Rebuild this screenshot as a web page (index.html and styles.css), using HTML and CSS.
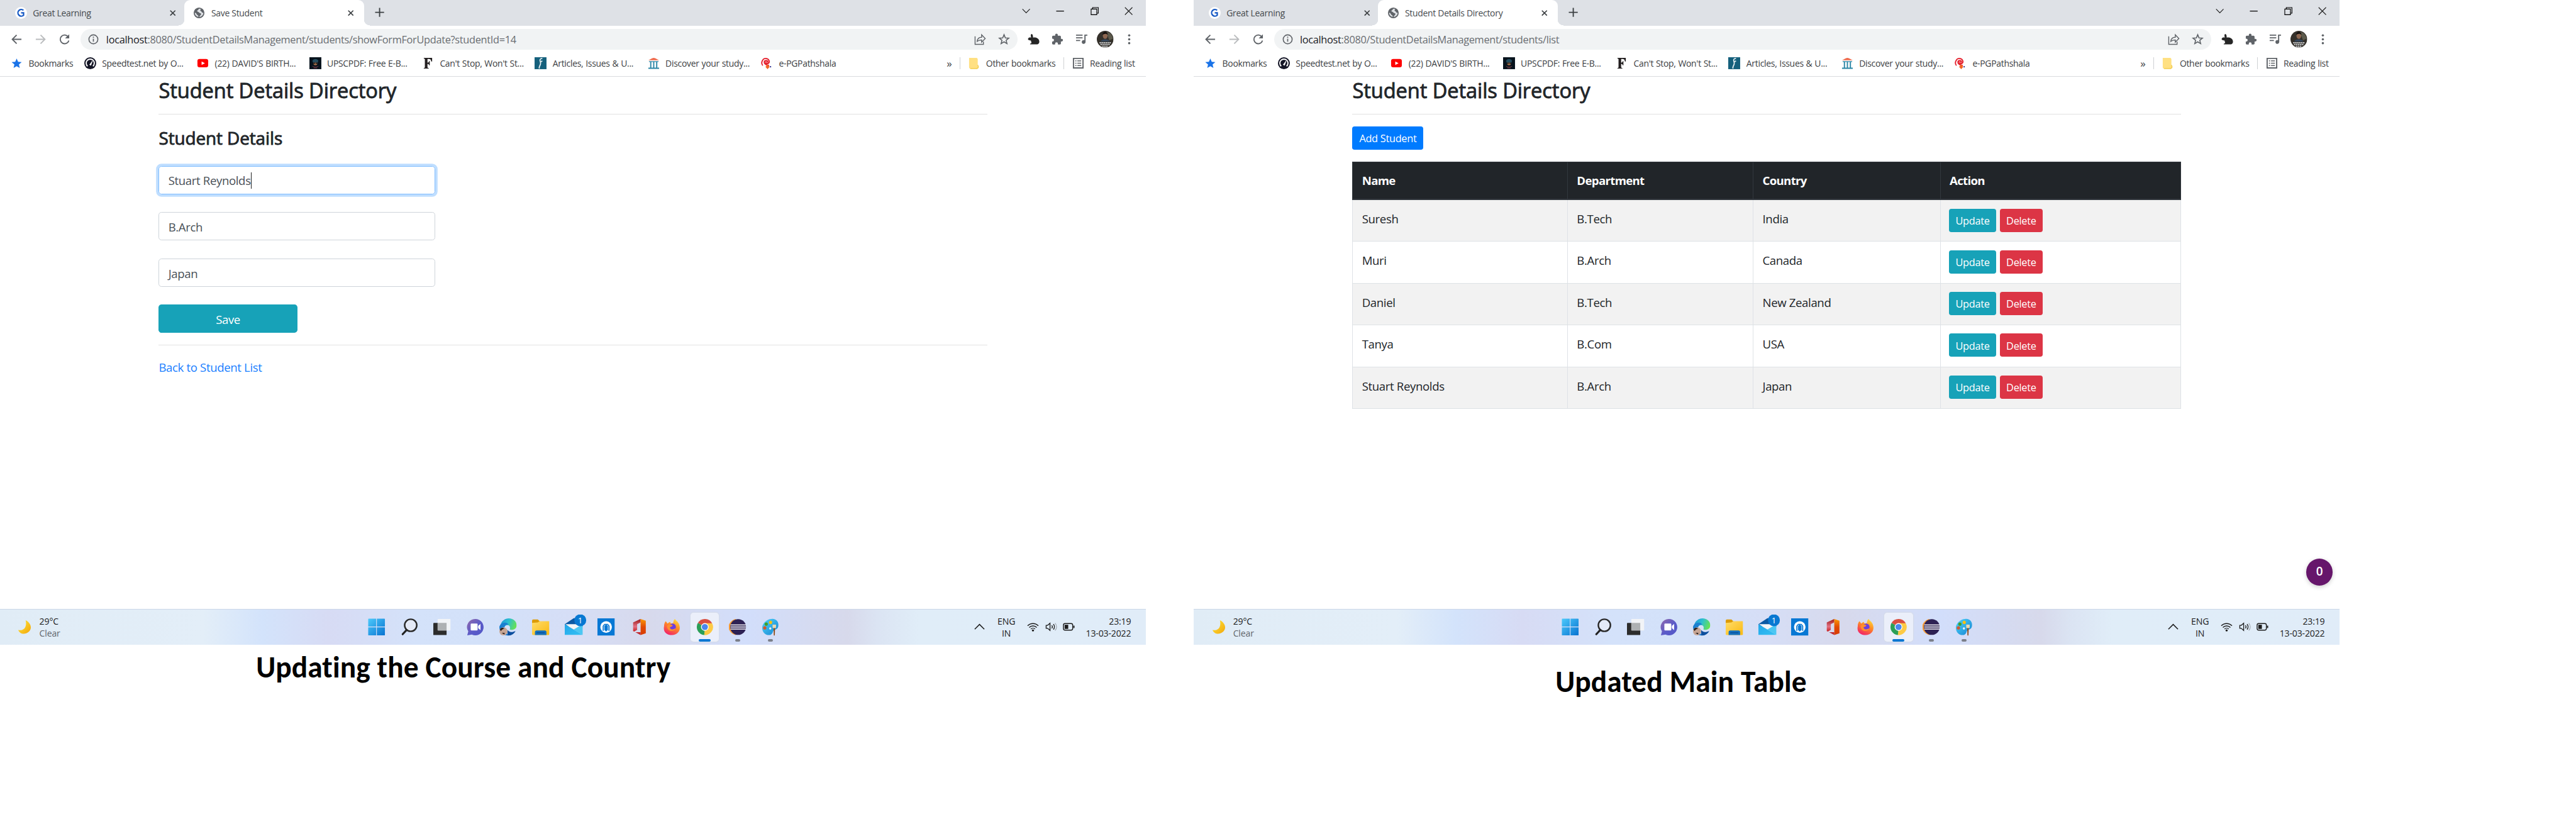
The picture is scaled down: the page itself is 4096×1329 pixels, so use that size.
FILE: index.html
```html
<!DOCTYPE html>
<html lang="en">
<head>
<meta charset="utf-8">
<title>Student Details Management</title>
<link rel="stylesheet" href="styles.css">
</head>
<body>
<svg class="defs" aria-hidden="true">
  <defs>
    <linearGradient id="gMoon" x1="0" y1="0" x2="1" y2="1"><stop offset="0" stop-color="#ffe93b"/><stop offset="1" stop-color="#f2a60c"/></linearGradient>
    <linearGradient id="gWin" x1="0" y1="0" x2="1" y2="1"><stop offset="0" stop-color="#4cc9fb"/><stop offset="1" stop-color="#0873d1"/></linearGradient>
    <linearGradient id="gChat" x1="0" y1="0" x2="1" y2="1"><stop offset="0" stop-color="#9369ac"/><stop offset=".55" stop-color="#5a5bc9"/><stop offset="1" stop-color="#5257c7"/></linearGradient>
    <linearGradient id="gEdge" x1="0" y1="0" x2="1" y2=".4"><stop offset="0" stop-color="#1c8fd8"/><stop offset=".5" stop-color="#2cbfd0"/><stop offset="1" stop-color="#69e34f"/></linearGradient>
    <linearGradient id="gFold" x1="0" y1="0" x2="1" y2="1"><stop offset="0" stop-color="#ffdc69"/><stop offset="1" stop-color="#fab912"/></linearGradient>
    <linearGradient id="gMail" x1="0" y1="0" x2="1" y2="1"><stop offset="0" stop-color="#22a6ea"/><stop offset="1" stop-color="#35c1f3"/></linearGradient>
    <linearGradient id="gOff" x1="0" y1="0" x2="0" y2="1"><stop offset="0" stop-color="#9c1513"/><stop offset=".6" stop-color="#e27386"/><stop offset="1" stop-color="#c71f1f"/></linearGradient>
    <linearGradient id="gOff2" x1="0" y1="0" x2="0" y2="1"><stop offset="0" stop-color="#fb9a06"/><stop offset=".5" stop-color="#e14a05"/><stop offset="1" stop-color="#d83b01"/></linearGradient>
    <linearGradient id="gFox" x1=".8" y1="0" x2=".3" y2="1"><stop offset="0" stop-color="#ffe23f"/><stop offset=".45" stop-color="#ff8a25"/><stop offset="1" stop-color="#f2206a"/></linearGradient>
    <linearGradient id="gPaint" x1="0" y1="0" x2="1" y2="1"><stop offset="0" stop-color="#4fd3f8"/><stop offset="1" stop-color="#1583d2"/></linearGradient>

    <symbol id="g-learning" viewBox="0 0 20 20"><circle cx="10" cy="10" r="10" fill="#fff"/><path d="M14 5.600A5.600 5.600 0 1 0 14.200 14V10H10" fill="none" stroke="#1558c4" stroke-width="2.400"/></symbol>
    <symbol id="globe" viewBox="0 0 20 20"><circle cx="10" cy="10" r="9" fill="#5f6368"/><path d="M10.500 2.800c-2 1-1.500 2.200-3 3-1.500.8-.7 2 .8 2.400 2 .4 1.300 1.800 3 2 1.800.2 2.700 1 2 2.600-.7 1.400-2.300 1.700-2.800 4.200 4-.5 6.700-3.600 6.700-7.200-1.500.3-2.600-.4-3-1.800-.4-1.500-1.900-.6-2.200-2.300-.2-1.300 1.300-1.500 1-2.300zM2.800 9.600c.2 3.900 2.800 6.700 6 7.200.5-2.200-.6-2.500-2-3.500-1.300-1-.7-2.700-4-3.700z" fill="#dfe2e6"/></symbol>
    <symbol id="x" viewBox="0 0 10 10"><path d="M.8.8l8.400 8.400M9.200.8L.8 9.200" stroke="#3c4043" stroke-width="1.800"/></symbol>
    <symbol id="plus" viewBox="0 0 16 16"><path d="M8 .5v15M.5 8h15" stroke="#3c4043" stroke-width="2"/></symbol>
    <symbol id="back" viewBox="0 0 20 20"><path d="M18 10H3M10 2.700L2.700 10l7.300 7.300" fill="none" stroke="currentColor" stroke-width="2"/></symbol>
    <symbol id="reload" viewBox="0 0 20 20"><path d="M16.300 6A7.300 7.300 0 1 0 17.300 12" fill="none" stroke="#5f6368" stroke-width="2"/><path d="M18 1.500v7h-7z" fill="#5f6368"/></symbol>
    <symbol id="info" viewBox="0 0 20 20"><circle cx="10" cy="10" r="7.500" fill="none" stroke="#5f6368" stroke-width="1.700"/><path d="M10 9v5M10 5.500v2" stroke="#5f6368" stroke-width="1.800"/></symbol>
    <symbol id="share" viewBox="0 0 20 20"><path d="M1.500 5v13.500h14V14M5 13.500c.5-5 3.500-7 7.500-7V2.500l6 6.200-6 6V11c-3.500 0-5.500.8-7.500 2.500z" fill="none" stroke="#5f6368" stroke-width="1.500"/></symbol>
    <symbol id="star-o" viewBox="0 0 20 20"><path d="M10 2.300l2.200 5.300 5.700.4-4.400 3.700 1.400 5.500L10 14.200l-4.900 3 1.400-5.500L2.100 8l5.700-.4z" fill="none" stroke="#5f6368" stroke-width="1.700"/></symbol>
    <symbol id="rabbit" viewBox="0 0 20 20"><path d="M6 7C5 4 5 1 7 1c2 1 2 4 2 6 4-1 10 1 10.500 6 .5 3-1 5-3 5.500H4c0-1.500 1.500-2 2.500-2.200L5.500 12C2 12 0 10.500.7 9 2 6.500 4 7 6 7z" fill="#262626"/></symbol>
    <symbol id="puzzle" viewBox="0 0 20 20"><path d="M17 9.200h-1.300V5.700c0-1-.8-1.800-1.700-1.800h-3.500V2.700a2.200 2.200 0 0 0-4.400 0v1.200H2.700C1.700 3.900 1 4.700 1 5.700V9h1.200a2.400 2.400 0 0 1 0 4.700H1V17c0 1 .7 1.800 1.700 1.800H6v-1.300a2.300 2.300 0 0 1 4.700 0v1.300H14c1 0 1.700-.8 1.700-1.800v-3.400H17a2.200 2.200 0 0 0 0-4.400z" fill="#5f6368"/></symbol>
    <symbol id="playlist" viewBox="0 0 20 20"><path d="M1 3h11M1 7.500h11M1 12h7" stroke="#5f6368" stroke-width="2"/><path d="M20 2h-5v9.600a3.200 3.200 0 1 0 2 3V4h3z" fill="#5f6368"/></symbol>
    <symbol id="avatar" viewBox="0 0 28 28"><circle cx="14" cy="14" r="14" fill="#34302a"/><path d="M16 2c6 0 10 5 11 11l-6 3z" fill="#5d5a4c"/><ellipse cx="14" cy="8" rx="4" ry="5.500" fill="#8c6650"/><path d="M9.500 7c0-7 9-7 9 0-3-3-6-2-9 0z" fill="#15110f"/><path d="M6 18c3-5 13-5 16 0z" fill="#34465c"/><path d="M4.500 20h19M6 23h16M9 26h10" stroke="#c9cccf" stroke-width="2" stroke-dasharray="2.500 .8"/></symbol>
    <symbol id="dots" viewBox="0 0 20 20"><g fill="#5f6368"><circle cx="10" cy="3.500" r="1.900"/><circle cx="10" cy="10" r="1.900"/><circle cx="10" cy="16.500" r="1.900"/></g></symbol>
    <symbol id="star" viewBox="0 0 20 20"><path d="M10 2l2.400 5.600 6 .5-4.600 4 1.400 5.900L10 14.900 4.800 18l1.400-5.900-4.600-4 6-.5z" fill="#1a73e8"/></symbol>
    <symbol id="speed" viewBox="0 0 20 20"><circle cx="10" cy="10" r="10" fill="#141526"/><path d="M5.500 15A6.800 6.800 0 1 1 14.500 15" fill="none" stroke="#fff" stroke-width="2"/><path d="M9 12.500l4.500-6-2.500 7z" fill="#fff" stroke="#fff"/></symbol>
    <symbol id="yt" viewBox="0 0 20 20"><rect x="1" y="3" width="18" height="14" rx="3.500" fill="#f00"/><path d="M8 7l5.500 3L8 13z" fill="#fff"/></symbol>
    <symbol id="upsc" viewBox="0 0 20 20"><path d="M0 0h20v20H0z" fill="#07131d"/><path d="M5 6c2-4 8-4 10 0l-1 3H6z" fill="#244c5e"/><path d="M7 9h6v3c-1.500 2-4.500 2-6 0z" fill="#a06c48"/><path d="M7 10h2.500M10.500 10H13" stroke="#111" stroke-width="1.500"/><path d="M5 15c3 2 7 2 10 0M7 18h6" stroke="#7d3b44" fill="none"/></symbol>
    <symbol id="f-mark" viewBox="0 0 20 20"><path d="M3 1h14v6h-1.500c-.5-3-1.500-4-4-4H9.200v6c1.800 0 2.300-.8 2.600-2.500H13v7h-1.200c-.3-1.700-.8-2.500-2.600-2.500v5.500c0 1 .6 1.400 2 1.500v1H3v-1c1.300-.1 1.800-.5 1.800-1.500V3.500C4.800 2.500 4.300 2.100 3 2z" fill="#231f20"/></symbol>
    <symbol id="articles" viewBox="0 0 20 20"><path d="M0 0h20v20H0z" fill="#15607c"/><path d="M13 2c-4 0-4.500 2.500-3.500 5s1 3 .3 5-2.800 4-1.800 7M10 8l3-2" fill="none" stroke="#e6eff2" stroke-width="1.800"/></symbol>
    <symbol id="museum" viewBox="0 0 20 20"><path d="M1 5c3-1.500 6-3.500 9-4 3 .5 6 2.500 9 4H1z" fill="#ef6a4c"/><path d="M2 6.500h16v1.300H2zM4 8h2v9.500H4zM9 8h2v9.500H9zM14 8h2v9.500h-2zM1 17.500h18v2H1z" fill="#2b86a6"/></symbol>
    <symbol id="epg" viewBox="0 0 20 20"><path d="M3 14C-1 9 3 2 8 2s8 6 4 8.500H7M5.500 8h6C11 4.500 6 4.500 5.500 8c0 5 5 5 8 6" fill="none" stroke="#e5202d" stroke-width="2"/><path d="M11 12l3.500 4-3.500 4-3.500-4z" fill="#f26522"/><circle cx="16" cy="16" r="1.200" fill="#2b2a8c"/></symbol>
    <symbol id="folder" viewBox="0 0 20 20"><path d="M2 1h13l1.500 2v11l1 5H4c-1 0-2-.7-2-2z" fill="#ffe082"/><path d="M16.500 13l1.200 3.500-2.200 2.500H4" fill="none" stroke="#f3cd4f" stroke-width="1.500"/></symbol>
    <symbol id="reading" viewBox="0 0 20 20"><path d="M2 2h16v16H2z" fill="none" stroke="#5f6368" stroke-width="2"/><path d="M5 6h2M5 10h2M5 14h2M8.500 6H15M8.500 10H15M8.500 14H15" stroke="#5f6368" stroke-width="1.700"/></symbol>
    <symbol id="w-chev" viewBox="0 0 14 14"><path d="M.8 3.500L7 10l6.200-6.500" fill="none" stroke="#222" stroke-width="1.200"/></symbol>
    <symbol id="w-min" viewBox="0 0 14 14"><path d="M.5 7h13" stroke="#000" stroke-width="1.300"/></symbol>
    <symbol id="w-max" viewBox="0 0 14 14"><path d="M1 3.500h9.500V13H1zM3.500 3.500V1H13v9.500h-2.500" fill="none" stroke="#000" stroke-width="1.200"/></symbol>
    <symbol id="w-x" viewBox="0 0 14 14"><path d="M.8.8l12.400 12.400M13.200.8L.8 13.200" stroke="#222" stroke-width="1.200"/></symbol>

    <symbol id="moon" viewBox="0 0 24 26"><path d="M14 1c12 6 12 19 1 23-6 2-12-.5-14-6 9 2 16-4 13-17z" fill="url(#gMoon)"/></symbol>
    <symbol id="t-win" viewBox="0 0 30 30"><path d="M.5 1.500q0-1 1-1h12.800v13.800H.5zM15.500.5h13q1 0 1 1v12.800h-14zM.5 15.500h13.800v14H1.500q-1 0-1-1zM15.500 15.500h14v13q0 1-1 1h-13z" fill="url(#gWin)"/></symbol>
    <symbol id="t-search" viewBox="0 0 30 30"><circle cx="17.500" cy="12" r="10.500" fill="#e4e9f6" stroke="#2a2a2a" stroke-width="2.700"/><path d="M10.500 20L3.500 27.500" stroke="#222" stroke-width="3.400" stroke-linecap="round"/></symbol>
    <symbol id="t-task" viewBox="0 0 30 30"><rect y="8" width="23" height="21" rx="1" fill="#2c2c2c"/><rect x="7.500" y="1" width="22.500" height="20" rx="1" fill="#f2f4f7"/><path d="M7.500 8H23v13H7.500z" fill="#aeb1b3"/></symbol>
    <symbol id="t-chat" viewBox="0 0 30 30"><path d="M15 1a14.200 14.200 0 1 1-6 27L1 29.500l1.800-6.800A14.200 14.200 0 0 1 15 1z" fill="url(#gChat)"/><rect x="7" y="9" width="12" height="12" rx="1.500" fill="#fff"/><path d="M20 13l4-3.500v11L20 17z" fill="#fff"/></symbol>
    <symbol id="t-edge" viewBox="0 0 30 30"><path d="M2 24C-1 12 4 1 16 0c9 0 14 6 14 12 0 7-8 9.500-12 7 3-8-7-10-10-3-2 4-1 9 1 12z" fill="url(#gEdge)"/><path d="M0 15c1-7 12-11 16-4-6-1-8 3-7 9 1 4 4 8 8 10C7 30 0 24 0 15z" fill="#1b7fd0"/><path d="M14 20c3 5 9 4 14 2-3 6-9 8.500-14 7.500z" fill="#0d4f9e"/><circle cx="7" cy="22.500" r="7" fill="#c7a594"/><path d="M1 20c1-5 6-4 8-2-3 0-5 2-6 4zM4 25h5v3z" fill="#2a211e"/></symbol>
    <symbol id="t-folder" viewBox="0 0 30 30"><path d="M0 4q0-2 2-2h8l3 3v6H0z" fill="#dd9c08"/><path d="M0 8l10-1 3-2h17v22q0 2-2 2H2q-2 0-2-2z" fill="url(#gFold)"/><path d="M5 29v-5q0-3 3-3h14q3 0 3 3v5z" fill="#1471bf"/><path d="M8 25h14" stroke="#0b4d91" stroke-width="1.500"/></symbol>
    <symbol id="t-mail" viewBox="0 0 36 36"><path d="M0 16L15 6h8l7 10v4H0z" fill="#0b59a4"/><path d="M1 16h28v4L16 27z" fill="#f3f5f7"/><path d="M30 16v18L15 25z" fill="#4bc7f2"/><path d="M0 16l30 18H0z" fill="url(#gMail)"/><circle cx="26" cy="9.500" r="10" fill="#0878d2"/></symbol>
    <symbol id="t-dell" viewBox="0 0 30 30"><path d="M0 0h30v30H0z" fill="#0878d4"/><circle cx="15" cy="15" r="10" fill="#fff"/><path d="M9 22V13l3-3.500h6l3 3.500v9l-3.500-1.500L15 23l-2.500-2.500z" fill="#0878d4"/><path d="M11.500 21v-7.500l2-2.500M18.500 21v-7.500l-2-2.500" fill="none" stroke="#fff" stroke-width="1"/></symbol>
    <symbol id="t-office" viewBox="0 0 30 30"><path d="M4 7L17 1v6l-6 3v10l-5 3-2-1z" fill="url(#gOff)"/><path d="M17 1l9 3v22l-9 3z" fill="url(#gOff2)"/><path d="M8 24h9v5z" fill="#c2282d"/></symbol>
    <symbol id="t-fox" viewBox="0 0 30 30"><path d="M4 5l3 4 4-3 2 3 4-1c0-3 1-6 3-7 1 3 5 4 7 9 4 10-2 19-12 19S-1 23 1 14c0-4 1-7 3-9z" fill="url(#gFox)"/><circle cx="15.500" cy="15" r="6" fill="#6a3fe0"/><path d="M6 13c3-3 6-3 10-1-1 3-4 2-5 4 2 5 8 3 10 1-1 7-15 7-15-4z" fill="#ff8f2e"/></symbol>
    <symbol id="t-chrome" viewBox="0 0 30 30"><path d="M15 15L3 8A14 14 0 0 1 27.500 8.500z" fill="#d94f41"/><path d="M15 15l12.500-6.500A14 14 0 0 1 14 29z" fill="#fdca45"/><path d="M15 15L14 29A14 14 0 0 1 2.900 8z" fill="#2b9f57"/><path d="M15 8.500h12.400L21 15z" fill="#fdca45"/><circle cx="15" cy="15" r="6.700" fill="#fff"/><circle cx="15" cy="15" r="5.300" fill="#4a87ee"/></symbol>
    <symbol id="t-eclipse" viewBox="0 0 30 30"><path d="M12 1.500C-4 5-4 25 12 28.500-1 21-1 9 12 1.500z" fill="#f79a32" stroke="#f79a32"/><circle cx="16" cy="15" r="13.700" fill="#2d2154"/><path d="M3 11.500h27M3 15h27M3 18.500h27" stroke="#fff" stroke-width="1.500"/></symbol>
    <symbol id="t-paint" viewBox="0 0 30 30"><path d="M17 1c8-1 13 5 12 12-1 8-7 5-9 9-1 4-3 7-7 7-8 0-12-6-12-13S9 1 17 1z" fill="url(#gPaint)"/><circle cx="15" cy="17.500" r="2" fill="#e6f5fc"/><circle cx="8" cy="10" r="2.800" fill="#3fa02a"/><circle cx="15.500" cy="7" r="2.800" fill="#f8c012"/><circle cx="5.500" cy="16.500" r="2.800" fill="#d5572c"/><path d="M19 11h6v5l-3 2-3-2z" fill="#e8d9b4"/><path d="M20.700 17h2.600l-.5 13h-1.600z" fill="#8e4b17"/></symbol>
    <symbol id="y-up" viewBox="0 0 20 20"><path d="M2 14l8-8 8 8" fill="none" stroke="#1b1b1b" stroke-width="1.600"/></symbol>
    <symbol id="y-wifi" viewBox="0 0 20 20"><path d="M1 8.200a12.600 12.600 0 0 1 18 0M3.700 11a8.800 8.800 0 0 1 12.600 0M6.500 13.700a5 5 0 0 1 7 0" fill="none" stroke="#1b1b1b" stroke-width="1.500"/><circle cx="10" cy="16" r="1.700" fill="#1b1b1b"/></symbol>
    <symbol id="y-sound" viewBox="0 0 20 20"><path d="M1.500 7.500H4L8 4v12l-4-3.500H1.500z" fill="none" stroke="#1b1b1b" stroke-width="1.400"/><path d="M11 7.500q2 2.500 0 5M13.700 5.500q3.500 4.500 0 9" fill="none" stroke="#1b1b1b" stroke-width="1.400"/><path d="M16.500 3.800q5 6 0 12.400" fill="none" stroke="#a0a6ac" stroke-width="1.200"/></symbol>
    <symbol id="y-bat" viewBox="0 0 20 20"><rect x="1" y="4.500" width="15.500" height="11" rx="2.500" fill="none" stroke="#1b1b1b" stroke-width="1.500"/><rect x="3" y="6.500" width="6" height="7" fill="#1b1b1b"/><path d="M18.500 8v4" stroke="#1b1b1b" stroke-width="2"/></symbol>
  </defs>
</svg>

<main class="board">
  <figure class="shot">
    <div class="tabs">
      <div class="tab"><svg class="i20"><use href="#g-learning"/></svg><span class="tab-name">Great Learning</span><svg class="i10"><use href="#x"/></svg></div>
      <div class="tab active"><svg class="i20"><use href="#globe"/></svg><span class="tab-name">Save Student</span><svg class="i10"><use href="#x"/></svg></div>
      <svg class="newtab"><use href="#plus"/></svg>
      <div class="controls"><svg><use href="#w-chev"/></svg><svg><use href="#w-min"/></svg><svg><use href="#w-max"/></svg><svg><use href="#w-x"/></svg></div>
    </div>
    <div class="toolbar">
      <span class="tool"><svg class="i20"><use href="#back"/></svg></span><span class="tool off"><svg class="i20 flip"><use href="#back"/></svg></span><span class="tool"><svg class="i20"><use href="#reload"/></svg></span>
      <div class="omnibox"><svg class="i20"><use href="#info"/></svg><span class="url"><b>localhost</b>:8080/StudentDetailsManagement/students/showFormForUpdate?studentId=14</span><svg class="i20"><use href="#share"/></svg><svg class="i20"><use href="#star-o"/></svg></div>
      <span class="tool"><svg class="i20"><use href="#rabbit"/></svg></span><span class="tool"><svg class="i20"><use href="#puzzle"/></svg></span><span class="tool"><svg class="i20"><use href="#playlist"/></svg></span><span class="tool"><svg class="i28"><use href="#avatar"/></svg></span><span class="tool"><svg class="i20"><use href="#dots"/></svg></span>
    </div>
    <div class="bookmarks">
      <div class="marks">
        <span><svg class="i20"><use href="#star"/></svg>Bookmarks</span>
        <span><svg class="i20"><use href="#speed"/></svg>Speedtest.net by O...</span>
        <span><svg class="i20"><use href="#yt"/></svg>(22) DAVID'S BIRTH...</span>
        <span><svg class="i20"><use href="#upsc"/></svg>UPSCPDF: Free E-B...</span>
        <span><svg class="i20"><use href="#f-mark"/></svg>Can't Stop, Won't St...</span>
        <span><svg class="i20"><use href="#articles"/></svg>Articles, Issues &amp; U...</span>
        <span><svg class="i20"><use href="#museum"/></svg>Discover your study...</span>
        <span><svg class="i20"><use href="#epg"/></svg>e-PGPathshala</span>
      </div>
      <span class="more">»</span>
      <span class="other"><svg class="i20"><use href="#folder"/></svg>Other bookmarks</span>
      <span class="reading"><svg class="i20"><use href="#reading"/></svg>Reading list</span>
    </div>
    <section class="page">
      <h3>Student Details Directory</h3>
      <hr>
      <h4>Student Details</h4>
      <form class="form">
        <div class="field focus"><span>Stuart Reynolds</span><i class="caret"></i></div>
        <div class="field">B.Arch</div>
        <div class="field">Japan</div>
        <button type="button" class="btn save">Save</button>
      </form>
      <hr>
      <a class="link">Back to Student List</a>
    </section>
    <div class="taskbar">
      <svg class="moon"><use href="#moon"/></svg>
      <div class="weather"><span>29°C</span><span class="dim">Clear</span></div>
      <div class="apps">
        <span><svg><use href="#t-win"/></svg></span><span><svg><use href="#t-search"/></svg></span><span><svg><use href="#t-task"/></svg></span><span><svg><use href="#t-chat"/></svg></span><span><svg><use href="#t-edge"/></svg></span><span><svg><use href="#t-folder"/></svg></span><span class="mail"><svg><use href="#t-mail"/></svg><em>1</em></span><span><svg><use href="#t-dell"/></svg></span><span><svg><use href="#t-office"/></svg></span><span><svg><use href="#t-fox"/></svg></span><span class="current"><svg><use href="#t-chrome"/></svg></span><span class="open"><svg><use href="#t-eclipse"/></svg></span><span class="open"><svg><use href="#t-paint"/></svg></span>
      </div>
      <div class="tray"><svg><use href="#y-up"/></svg><div class="lang"><span>ENG</span><span>IN</span></div><svg><use href="#y-wifi"/></svg><svg><use href="#y-sound"/></svg><svg><use href="#y-bat"/></svg><div class="clock"><span>23:19</span><span>13-03-2022</span></div></div>
    </div>
    <figcaption class="cap-form">Updating the Course and Country</figcaption>
  </figure>

  <figure class="shot">
    <div class="tabs">
      <div class="tab"><svg class="i20"><use href="#g-learning"/></svg><span class="tab-name">Great Learning</span><svg class="i10"><use href="#x"/></svg></div>
      <div class="tab active"><svg class="i20"><use href="#globe"/></svg><span class="tab-name">Student Details Directory</span><svg class="i10"><use href="#x"/></svg></div>
      <svg class="newtab"><use href="#plus"/></svg>
      <div class="controls"><svg><use href="#w-chev"/></svg><svg><use href="#w-min"/></svg><svg><use href="#w-max"/></svg><svg><use href="#w-x"/></svg></div>
    </div>
    <div class="toolbar">
      <span class="tool"><svg class="i20"><use href="#back"/></svg></span><span class="tool off"><svg class="i20 flip"><use href="#back"/></svg></span><span class="tool"><svg class="i20"><use href="#reload"/></svg></span>
      <div class="omnibox"><svg class="i20"><use href="#info"/></svg><span class="url"><b>localhost</b>:8080/StudentDetailsManagement/students/list</span><svg class="i20"><use href="#share"/></svg><svg class="i20"><use href="#star-o"/></svg></div>
      <span class="tool"><svg class="i20"><use href="#rabbit"/></svg></span><span class="tool"><svg class="i20"><use href="#puzzle"/></svg></span><span class="tool"><svg class="i20"><use href="#playlist"/></svg></span><span class="tool"><svg class="i28"><use href="#avatar"/></svg></span><span class="tool"><svg class="i20"><use href="#dots"/></svg></span>
    </div>
    <div class="bookmarks">
      <div class="marks">
        <span><svg class="i20"><use href="#star"/></svg>Bookmarks</span>
        <span><svg class="i20"><use href="#speed"/></svg>Speedtest.net by O...</span>
        <span><svg class="i20"><use href="#yt"/></svg>(22) DAVID'S BIRTH...</span>
        <span><svg class="i20"><use href="#upsc"/></svg>UPSCPDF: Free E-B...</span>
        <span><svg class="i20"><use href="#f-mark"/></svg>Can't Stop, Won't St...</span>
        <span><svg class="i20"><use href="#articles"/></svg>Articles, Issues &amp; U...</span>
        <span><svg class="i20"><use href="#museum"/></svg>Discover your study...</span>
        <span><svg class="i20"><use href="#epg"/></svg>e-PGPathshala</span>
      </div>
      <span class="more">»</span>
      <span class="other"><svg class="i20"><use href="#folder"/></svg>Other bookmarks</span>
      <span class="reading"><svg class="i20"><use href="#reading"/></svg>Reading list</span>
    </div>
    <section class="page">
      <h3>Student Details Directory</h3>
      <hr>
      <button type="button" class="btn small add">Add Student</button>
      <table class="students">
        <colgroup><col class="c-name"><col class="c-dept"><col class="c-country"><col></colgroup>
        <thead><tr><th>Name</th><th>Department</th><th>Country</th><th>Action</th></tr></thead>
        <tbody>
          <tr><td>Suresh</td><td>B.Tech</td><td>India</td><td class="act"><div class="actions"><a class="btn small update">Update</a><a class="btn small delete">Delete</a></div></td></tr>
          <tr><td>Muri</td><td>B.Arch</td><td>Canada</td><td class="act"><div class="actions"><a class="btn small update">Update</a><a class="btn small delete">Delete</a></div></td></tr>
          <tr><td>Daniel</td><td>B.Tech</td><td>New Zealand</td><td class="act"><div class="actions"><a class="btn small update">Update</a><a class="btn small delete">Delete</a></div></td></tr>
          <tr><td>Tanya</td><td>B.Com</td><td>USA</td><td class="act"><div class="actions"><a class="btn small update">Update</a><a class="btn small delete">Delete</a></div></td></tr>
          <tr><td>Stuart Reynolds</td><td>B.Arch</td><td>Japan</td><td class="act"><div class="actions"><a class="btn small update">Update</a><a class="btn small delete">Delete</a></div></td></tr>
        </tbody>
      </table>
      <span class="counter">0</span>
    </section>
    <div class="taskbar">
      <svg class="moon"><use href="#moon"/></svg>
      <div class="weather"><span>29°C</span><span class="dim">Clear</span></div>
      <div class="apps">
        <span><svg><use href="#t-win"/></svg></span><span><svg><use href="#t-search"/></svg></span><span><svg><use href="#t-task"/></svg></span><span><svg><use href="#t-chat"/></svg></span><span><svg><use href="#t-edge"/></svg></span><span><svg><use href="#t-folder"/></svg></span><span class="mail"><svg><use href="#t-mail"/></svg><em>1</em></span><span><svg><use href="#t-dell"/></svg></span><span><svg><use href="#t-office"/></svg></span><span><svg><use href="#t-fox"/></svg></span><span class="current"><svg><use href="#t-chrome"/></svg></span><span class="open"><svg><use href="#t-eclipse"/></svg></span><span class="open"><svg><use href="#t-paint"/></svg></span>
      </div>
      <div class="tray"><svg><use href="#y-up"/></svg><div class="lang"><span>ENG</span><span>IN</span></div><svg><use href="#y-wifi"/></svg><svg><use href="#y-sound"/></svg><svg><use href="#y-bat"/></svg><div class="clock"><span>23:19</span><span>13-03-2022</span></div></div>
    </div>
    <figcaption class="cap-table">Updated Main Table</figcaption>
  </figure>
</main>
</body>
</html>
```
FILE: styles.css
```css
* { box-sizing: border-box; }
html { background: #fff; overflow: hidden; }
body { margin: 0; font-family: "Open Sans", "Noto Sans", sans-serif; color: #212529; }
.defs { position: absolute; width: 0; height: 0; }
svg { display: block; flex: none; overflow: visible; }
.i10 { width: 10px; height: 10px; }
.i20 { width: 20px; height: 20px; }
.i28 { width: 28px; height: 28px; }
.flip { transform: scaleX(-1); }

/* Both windows sit side by side on one scaled board */
.board { zoom: 0.94903; width: 4316px; height: 1400px; display: flex; gap: 80px; overflow: hidden; }
.shot { margin: 0; width: 1920px; flex: none; display: flex; flex-direction: column; }

/* Browser tab strip */
.tabs { height: 43px; background: #dee1e6; display: flex; align-items: flex-start; }
.tab { width: 309px; height: 43px; padding: 0 14px 0 25px; display: flex; align-items: center; gap: 10px; font-size: 14.7px; letter-spacing: -0.3px; color: #45494d; white-space: nowrap; }
.tab-name { flex: 1; }
.tab.active { position: relative; width: 301px; padding: 0 17px 0 15px; background: #fff; border-radius: 10px 10px 0 0; }
.tab.active::before, .tab.active::after { content: ""; position: absolute; bottom: 0; width: 10px; height: 10px; }
.tab.active::before { left: -10px; background: radial-gradient(circle at 0 0, transparent 9.5px, #fff 10px); }
.tab.active::after { right: -10px; background: radial-gradient(circle at 100% 0, transparent 9.5px, #fff 10px); }
.newtab { width: 16px; height: 16px; margin: 13px 0 0 18px; }
.controls { margin-left: auto; height: 37px; display: flex; align-items: center; }
.controls svg { width: 14px; height: 14px; margin: 0 21.7px; }

/* Address row */
.toolbar { height: 46px; padding: 0 8px; display: flex; align-items: center; }
.tool { width: 40px; display: flex; justify-content: center; color: #5f6368; }
.off { color: #babcbe; }
.omnibox { width: 1570px; height: 35px; margin: 0 7px; padding: 0 13px 0 12px; border-radius: 17.5px; background: #f1f3f4; display: flex; align-items: center; gap: 20px; }
.url { flex: 1; margin-left: -9px; font-size: 17.2px; letter-spacing: -0.32px; color: #6a6e72; white-space: nowrap; }
.url b { font-weight: 400; color: #202124; }

/* Bookmarks row */
.bookmarks { height: 40px; padding: 0 19px 5px 18px; border-bottom: 1px solid #d9dbde; display: flex; align-items: center; font-size: 14.7px; letter-spacing: -0.3px; word-spacing: 0.5px; color: #3c4043; white-space: nowrap; }
.marks { flex: 1; display: grid; grid-template-columns: 123px 189px 188px 189px 189px 189px 190px 1fr; }
.marks span, .other, .reading { display: flex; align-items: center; gap: 10px; }
.more { width: 22px; font-size: 18px; line-height: 18px; }
.other { width: 174px; height: 20px; padding-left: 13px; border-left: 1px solid #cfd1d4; }
.reading { height: 20px; width: 119px; padding-left: 13px; border-left: 1px solid #cfd1d4; }

/* Page content */
.page { position: relative; height: 891px; padding: 0 266px; font-size: 19.6px; line-height: 30px; letter-spacing: -0.38px; }
h3, h4 { margin: 0; font-weight: 400; -webkit-text-stroke: 0.9px #212529; }
h3 { font-size: 34.4px; line-height: 42px; letter-spacing: -0.1px; padding-top: 2px; height: 42px; margin-bottom: 20px; }
h4 { font-size: 29.4px; line-height: 36px; letter-spacing: -0.1px; padding-top: 1px; height: 36px; margin-bottom: 30px; }
hr { border: 0; height: 1px; margin: 0 0 20px; background: #e2e2e2; }
.form { display: flex; flex-direction: column; align-items: flex-start; gap: 30px; margin-bottom: 20px; }
.field { width: 463px; height: 47.5px; padding: 3px 15px 0; border: 1px solid #ced4da; border-radius: 5px; display: flex; align-items: center; color: #495057; }
.focus { border-color: #80bdff; box-shadow: 0 0 0 4px #bfdeff; }
.caret { width: 1px; height: 27px; margin-bottom: 2px; background: #222; }
.btn { border: 0; border-radius: 5px; display: flex; align-items: center; justify-content: center; color: #fff; font-family: inherit; font-size: 19.6px; letter-spacing: -0.4px; line-height: 30px; }
.save { width: 232px; height: 47.5px; padding: 3px 0 0; background: #17a2b8; }
.link { display: block; padding-top: 2px; color: #1a80ff; }
.small { height: 39px; padding: 2px 0 0; border-radius: 4px; font-size: 17.2px; letter-spacing: -0.3px; }
.add { width: 119px; background: #007bff; margin-bottom: 20px; }
.update { width: 79px; background: #17a2b8; }
.delete { width: 72px; background: #dc3545; }
.actions { display: flex; gap: 6px; }

.students { width: 1388px; table-layout: fixed; border-collapse: collapse; }
.c-name { width: 360px; }
.c-dept { width: 311px; }
.c-country { width: 313.5px; }
.students th, .students td { border: 1px solid #dee2e6; padding: 17px 15px 0; text-align: left; vertical-align: top; }
.students td { height: 70px; }
.students .act { padding: 14px 15px 0 14px; }
.students th { height: 63px; padding-top: 16px; border-color: #32383e; border-bottom-width: 3px; background: #212529; color: #fff; font-weight: 700; letter-spacing: -0.7px; }
.students tbody tr:nth-child(odd) { background: #f2f2f2; }
.counter { position: absolute; right: 12px; bottom: 39px; width: 44px; height: 45px; border-radius: 50%; background: #66166b; color: #fff; font-size: 20px; font-weight: 600; line-height: 43px; text-align: center; box-shadow: 0 2px 8px rgba(0, 0, 0, .2); }

/* Desktop taskbar */
.taskbar { position: relative; height: 60px; flex: none; display: flex; align-items: center; border-top: 1px solid #ccd7e8; font-size: 14.9px; line-height: 20px; letter-spacing: -0.2px; color: #1b1b1b; background: linear-gradient(90deg, #e0ecf6 0, #e3eef8 340px, #d3e3fb 440px, #d7dbf4 550px, #d4e2fa 700px, #d3e1f9 820px, #d6def6 960px, #d7d9ec 1090px, #d2defb 1250px, #d7d9eb 1420px, #dbe4f3 1470px, #e0edf8 1540px, #e0ecf8 100%); }
.moon { width: 23px; height: 25px; margin-left: 30px; }
.weather { width: 522px; margin-left: 13px; display: flex; flex-direction: column; }
.dim { color: #61666c; }
.apps { display: flex; gap: 7px; margin-left: 19px; }
.apps span { position: relative; width: 48px; height: 48px; display: flex; align-items: center; justify-content: center; }
.apps svg { width: 29px; height: 29px; }
.apps .mail svg { width: 36px; height: 36px; margin: -5px 0 0 6px; }
.apps em { position: absolute; left: 25px; top: 3px; width: 20px; text-align: center; font-style: normal; font-size: 14px; color: #fff; }
.apps .current { background: #ebeffa; border-radius: 5px; box-shadow: 0 0 1px 1px #d5dbe9; }
.apps .current::after, .apps .open::after { content: ""; position: absolute; bottom: 0; width: 20px; height: 4px; border-radius: 2px; background: #0877d3; }
.apps .open::after { width: 8px; background: #7b7f89; }
.tray { margin: 0 25px 0 auto; display: flex; align-items: center; gap: 10px; }
.tray svg { width: 20px; height: 20px; }
.lang { width: 50px; display: flex; flex-direction: column; align-items: center; }
.clock { width: 84px; display: flex; flex-direction: column; align-items: flex-end; }

figcaption { font: 700 50px/60px Carlito, Lato, sans-serif; font-variant-ligatures: none; letter-spacing: 0.1px; color: #000; white-space: nowrap; }
.cap-form { margin: 9px 0 0 429px; }
.cap-table { margin: 33px 0 0 606px; }
```
